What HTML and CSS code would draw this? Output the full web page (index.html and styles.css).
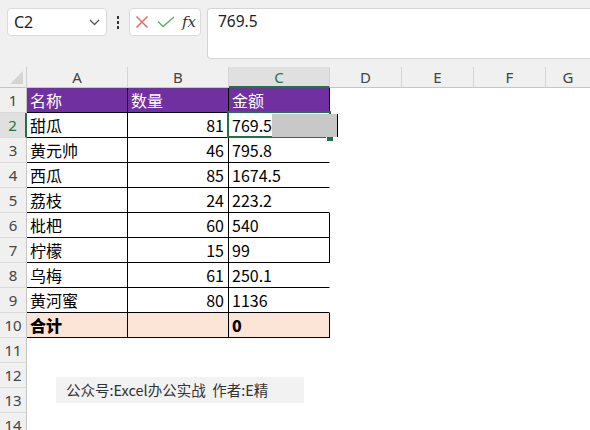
FILE: index.html
```html
<!DOCTYPE html>
<html>
<head>
<meta charset="utf-8">
<link rel="stylesheet" href="styles.css">
</head>
<body>
<div class="app">
  <div class="toolbar">
    <div class="namebox">
      <span class="ref">C2</span>
      <svg class="chev" width="11" height="7" viewBox="0 0 11 7"><path d="M1 1 L5.5 5.5 L10 1" fill="none" stroke="#555" stroke-width="1.3"/></svg>
    </div>
    <div class="dots"><i></i><i></i><i></i></div>
    <div class="fxbox">
      <svg width="14" height="14" viewBox="0 0 14 14"><path d="M1.5 1.5 L12.5 12.5 M12.5 1.5 L1.5 12.5" stroke="#e26b6b" stroke-width="1.5" fill="none"/></svg>
      <svg width="18" height="12" viewBox="0 0 18 12"><path d="M1 5.5 L6 10.5 L17 1" stroke="#5fae6a" stroke-width="1.5" fill="none"/></svg>
      <span class="fx">fx</span>
    </div>
    <div class="formula">769.5</div>
  </div>

  <div class="sheet">
    <div class="hrow">
      <div class="corner"><span class="tri"></span></div>
      <div class="ch">A</div><div class="ch">B</div><div class="ch sel">C</div><div class="ch w">D</div><div class="ch w">E</div><div class="ch w">F</div><div class="ch g">G</div>
    </div>

    <div class="row">
      <div class="rh">1</div>
      <div class="c head">名称</div><div class="c head">数量</div><div class="c head">金额</div>
    </div>
    <div class="row">
      <div class="rh rsel">2</div>
      <div class="c">甜瓜</div><div class="c num">81</div>
      <div class="c active">769.5
        <span class="selbox"></span><span class="handle"></span><span class="ghost"></span>
      </div>
    </div>
    <div class="row">
      <div class="rh">3</div>
      <div class="c">黄元帅</div><div class="c num">46</div><div class="c nr">795.8</div>
    </div>
    <div class="row">
      <div class="rh">4</div>
      <div class="c">西瓜</div><div class="c num">85</div><div class="c nr">1674.5</div>
    </div>
    <div class="row">
      <div class="rh">5</div>
      <div class="c">荔枝</div><div class="c num">24</div><div class="c nr">223.2</div>
    </div>
    <div class="row">
      <div class="rh">6</div>
      <div class="c">枇杷</div><div class="c num">60</div><div class="c">540</div>
    </div>
    <div class="row">
      <div class="rh">7</div>
      <div class="c">柠檬</div><div class="c num">15</div><div class="c">99</div>
    </div>
    <div class="row">
      <div class="rh">8</div>
      <div class="c">乌梅</div><div class="c num">61</div><div class="c nr">250.1</div>
    </div>
    <div class="row">
      <div class="rh">9</div>
      <div class="c">黄河蜜</div><div class="c num">80</div><div class="c nr">1136</div>
    </div>
    <div class="row">
      <div class="rh">10</div>
      <div class="c total">合计</div><div class="c total"></div><div class="c total">0</div>
    </div>
    <div class="row"><div class="rh">11</div></div>
    <div class="row"><div class="rh">12</div></div>
    <div class="row"><div class="rh">13</div></div>
    <div class="row"><div class="rh">14</div></div>

    <div class="watermark">公众号:Excel办公实战&nbsp;&nbsp;作者:E精</div>
  </div>
</div>
</body>
</html>
```

FILE: styles.css
```css
html, body {
  margin: 0;
  padding: 0;
  background: #ffffff;
  overflow: hidden;
}
.app {
  width: 590px;
  height: 430px;
  font-family: "Noto Sans CJK SC", "Noto Sans", sans-serif;
  color: #000;
}
.toolbar {
  height: 67px;
  box-sizing: border-box;
  background: #f0f0f0;
  display: flex;
  align-items: flex-start;
  padding: 8px 0 0 7px;
}
.namebox {
  width: 100px;
  height: 28px;
  box-sizing: border-box;
  background: #fff;
  border: 1px solid #dadada;
  border-radius: 4px;
  display: flex;
  align-items: center;
  justify-content: space-between;
  padding: 0 6px 0 6px;
}
.ref {
  font-family: "Noto Sans", sans-serif;
  font-size: 16px;
  color: #222;
  line-height: 1;
}
.chev { margin-top: 1px; }
.dots {
  width: 22px;
  height: 28px;
  display: flex;
  flex-direction: column;
  align-items: center;
  justify-content: center;
  gap: 2px;
}
.dots i {
  display: block;
  width: 2px;
  height: 3px;
  background: #333;
}
.fxbox {
  width: 72px;
  height: 28px;
  box-sizing: border-box;
  background: #fff;
  border: 1px solid #dadada;
  border-radius: 4px;
  display: flex;
  align-items: center;
  padding: 0 0 0 5px;
  gap: 8px;
}
.fx {
  font-family: "DejaVu Serif", "Liberation Serif", serif;
  font-style: italic;
  font-size: 15px;
  color: #333;
  margin-left: -1px;
  line-height: 1;
}
.formula {
  margin-left: 6px;
  flex: 1;
  height: 51px;
  box-sizing: border-box;
  background: #fff;
  border: 1px solid #d4d4d4;
  border-right: none;
  border-radius: 4px 0 0 4px;
  font-family: "Noto Sans", sans-serif;
  font-size: 15.5px;
  color: #222;
  padding: 2px 0 0 10px;
  line-height: 20px;
}

.sheet {
  position: relative;
}
.hrow {
  display: flex;
  height: 21px;
  background: #f0f0f0;
}
.corner {
  width: 27px;
  box-sizing: border-box;
  border-right: 1px solid #d0d0d0;
  border-bottom: 1px solid #c6c6c6;
  position: relative;
}
.tri {
  position: absolute;
  right: 3px;
  bottom: 3px;
  width: 0;
  height: 0;
  border-left: 13px solid transparent;
  border-bottom: 13px solid #d4d4d4;
}
.ch {
  width: 101px;
  box-sizing: border-box;
  border-right: 1px solid #d4d4d4;
  border-bottom: 1px solid #c6c6c6;
  text-align: center;
  font-family: "Noto Sans", sans-serif;
  font-size: 15px;
  color: #444;
  line-height: 21px;
}
.ch.w { width: 72px; }
.ch.g { flex: 1; border-right: none; }
.ch.sel {
  background: #e0e0e0;
  color: #217346;
  border-bottom: 2px solid #217346;
}

.row {
  display: flex;
  height: 25px;
}
.rh {
  width: 27px;
  flex: none;
  box-sizing: border-box;
  background: #f0f0f0;
  border-right: 1px solid #c6c6c6;
  border-bottom: 1px solid #dadada;
  text-align: center;
  font-family: "Noto Sans", sans-serif;
  font-size: 15px;
  color: #444;
  line-height: 24px;
}
.rh.rsel {
  background: #e0e0e0;
  color: #217346;
  border-right: 2px solid #217346;
}
.c {
  width: 101px;
  flex: none;
  box-sizing: border-box;
  border-right: 1px solid #000;
  border-bottom: 1px solid #000;
  font-size: 16px;
  line-height: 24px;
  padding: 0 4px 0 3px;
  white-space: nowrap;
  position: relative;
}
.c.num { text-align: right; }
.c.nr { border-right-color: transparent; }
.c.head {
  background: #7030a0;
  color: #fff;
}
.c.total {
  background: #fce4d6;
  font-weight: 900;
}
.selbox {
  position: absolute;
  left: -2px;
  top: -2px;
  width: 104px;
  height: 27px;
  box-sizing: border-box;
  border: 2px solid #217346;
}
.handle {
  position: absolute;
  left: 97px;
  top: 22px;
  width: 6px;
  height: 5px;
  background: #217346;
  border-left: 1px solid #fff;
  border-top: 1px solid #fff;
}
.ghost {
  position: absolute;
  left: 43px;
  top: 1px;
  width: 65px;
  height: 23px;
  background: #c8c8c8;
  border-right: 1px solid #000;
}
.watermark {
  position: absolute;
  left: 56px;
  top: 310px;
  width: 248px;
  height: 26px;
  box-sizing: border-box;
  background: #f2f2f2;
  color: #333;
  font-size: 14.5px;
  line-height: 26px;
  padding-left: 10px;
  white-space: nowrap;
}
```
